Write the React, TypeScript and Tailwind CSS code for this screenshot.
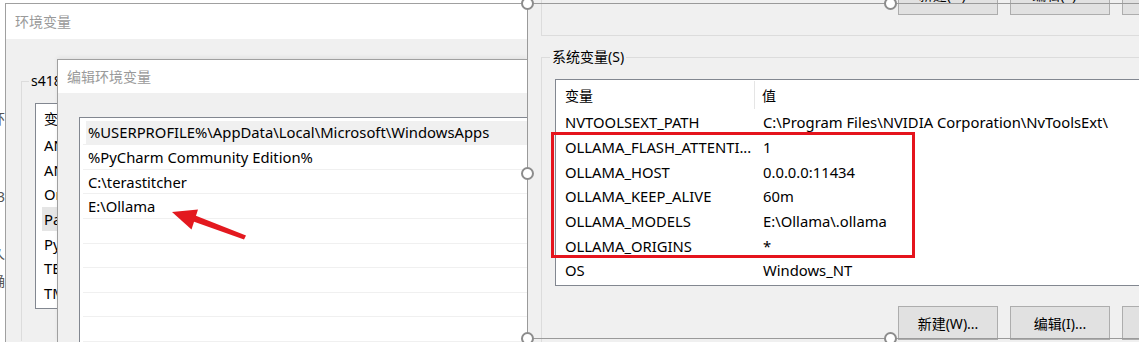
import React from 'react'

const font = "font-[family-name:'Noto_Sans','Noto_Sans_CJK_SC',sans-serif]"

const sysVars: [string, string][] = [
  ['NVTOOLSEXT_PATH', 'C:\\Program Files\\NVIDIA Corporation\\NvToolsExt\\'],
  ['OLLAMA_FLASH_ATTENTI...', '1'],
  ['OLLAMA_HOST', '0.0.0.0:11434'],
  ['OLLAMA_KEEP_ALIVE', '60m'],
  ['OLLAMA_MODELS', 'E:\\Ollama\\.ollama'],
  ['OLLAMA_ORIGINS', '*'],
  ['OS', 'Windows_NT'],
]

const pathRows = [
  '%USERPROFILE%\\AppData\\Local\\Microsoft\\WindowsApps',
  '%PyCharm Community Edition%',
  'C:\\terastitcher',
  'E:\\Ollama',
  '',
  '',
  '',
  '',
  '',
]

const userVars = ['ANDROID_HOME', 'ANDROID_SDK', 'OneDrive', 'Path', 'PyCharm', 'TEMP', 'TMP']

function Handle({ x, y }: { x: number; y: number }) {
  return (
    <div
      className="absolute w-[13px] h-[13px] rounded-full border-2 border-[#8c8c8c] bg-white"
      style={{ left: x - 6.5, top: y - 6.5 }}
    />
  )
}

function WinButton({ label, top }: { label: string; top?: boolean }) {
  return (
    <div
      className={`w-[100px] h-[34px] shrink-0 bg-[#e1e1e1] border border-[#adadad] flex justify-center text-[14px] text-black ${top ? 'items-start pt-[2px]' : 'items-center'}`}
    >
      {label}
    </div>
  )
}

export default function App() {
  return (
    <div className={`relative w-[1139px] h-[342px] bg-white overflow-hidden ${font}`}>
      {/* fragments of a window behind */}
      <div className="absolute left-0 top-0 w-[5px] h-[342px] overflow-hidden text-[14px] text-[#555]">
        <div className="absolute right-0 top-[108px]">环</div>
        <div className="absolute right-0 top-[186px]">3</div>
        <div className="absolute right-0 top-[242px]">久</div>
        <div className="absolute right-0 top-[270px]">确</div>
      </div>

      {/* 环境变量 window */}
      <div className="absolute left-[5px] top-[3px] w-[522px] h-[339px] border-l border-t border-[#a0a0a0] flex flex-col">
        <div className="h-[35px] bg-white flex items-center pl-[9px] text-[14px] text-[#9a9a9a]">环境变量</div>
        <div className="flex-1 bg-[#f0f0f0] pl-[15px] pt-[42px]">
          <div className="relative h-[260px] border-l border-t border-[#dcdcdc] pl-[13px] pt-[21px]">
            <div className="absolute left-[7px] -top-[11px] bg-[#f0f0f0] px-[2px] text-[14px] leading-[20px] text-black">s418</div>
            <div className="w-[60px] h-[206px] bg-white border border-[#828790] text-[14.8px] text-black overflow-hidden">
              <div className="h-[29px] flex items-center pl-[8px] text-[14px]">变量</div>
              {userVars.map((v) => (
                <div
                  key={v}
                  className={`h-[24.6px] flex items-center ml-[6px] pl-[2px] whitespace-nowrap ${v === 'Path' ? 'bg-[#e5e5e5]' : ''}`}
                >
                  {v}
                </div>
              ))}
            </div>
          </div>
        </div>
      </div>

      {/* 编辑环境变量 window */}
      <div className="absolute left-[57px] top-[59px] w-[470px] h-[283px] border-l border-t border-[#a0a0a0] flex flex-col shadow-[0_-2px_4px_rgba(0,0,0,0.06)]">
        <div className="h-[36px] bg-white flex items-center pl-[9px] text-[14px] text-[#9a9a9a]">编辑环境变量</div>
        <div className="flex-1 bg-[#f0f0f0] pl-[21px] pt-[24px]">
          <div className="h-full bg-white border-l border-t border-[#828790] pt-[3px] pl-[3px] text-[14.8px] text-black">
            {pathRows.map((p, i) => (
              <div key={i} className="h-[24.6px] border-b border-[#f0f0f0] flex items-center">
                <div className={`h-full flex-1 flex items-center ml-[3px] pl-[2px] whitespace-nowrap ${i === 0 ? 'bg-[#f0f0f0]' : ''}`}>{p}</div>
              </div>
            ))}
          </div>
        </div>
      </div>

      {/* red arrow */}
      <svg className="absolute left-0 top-0" width="300" height="260" viewBox="0 0 300 260">
        <polygon points="246,235.5 244,239.5 192,221 194,215" fill="#e3191f" />
        <polygon points="172,212 198,209.5 191.5,229.5" fill="#e3191f" />
      </svg>

      {/* 系统变量 picture */}
      <div className="absolute left-[527px] top-0 w-[612px] h-[342px] bg-[#f0f0f0] pl-[14px] text-black flex flex-col">
        <div className="h-[36px] shrink-0 flex items-start border-l border-b border-[#dcdcdc]">
          <div className="flex gap-[12px] ml-[356px] -mt-[19px]">
            <WinButton label="新建(N)..." top />
            <WinButton label="编辑(E)..." top />
            <WinButton label="删除(D)" top />
          </div>
        </div>
        <div className="h-[21px] shrink-0" />
        <div className="relative flex-1 border-l border-t border-[#dcdcdc] pl-[13px] pt-[21px]">
          <div className="absolute left-[8px] -top-[11px] bg-[#f0f0f0] px-[2px] text-[14px] leading-[20px]">系统变量(S)</div>
          <div className="h-[207px] bg-white border-l border-t border-b border-[#828790] text-[14.8px]">
            <div className="h-[30px] flex text-[14px]">
              <div className="w-[199px] flex items-center pl-[9px] border-r border-[#e5e5e5] my-[1px]">变量</div>
              <div className="flex items-center pl-[7px]">值</div>
            </div>
            {sysVars.map(([k, v]) => (
              <div key={k} className="h-[24.7px] flex items-center whitespace-nowrap">
                <div className="w-[200px] pl-[9px]">{k}</div>
                <div className="pl-[7px]">{v}</div>
              </div>
            ))}
          </div>
          <div className="flex gap-[12px] ml-[343px] mt-[20px]">
            <WinButton label="新建(W)..." />
            <WinButton label="编辑(I)..." />
            <WinButton label="删除(L)" />
          </div>
        </div>
      </div>

      {/* red highlight box */}
      <div className="absolute left-[551px] top-[132px] w-[364px] h-[126px] border-[3px] border-[#e5141d]" />

      {/* selection frame */}
      <div className="absolute left-[527px] top-[3px] w-[612px] h-[336px] border-l border-t border-b border-[#9a9a9a] pointer-events-none" />
      <Handle x={527} y={3} />
      <Handle x={527} y={173} />
      <Handle x={527} y={338} />
      <Handle x={890} y={3} />
      <Handle x={890} y={338} />
    </div>
  )
}
